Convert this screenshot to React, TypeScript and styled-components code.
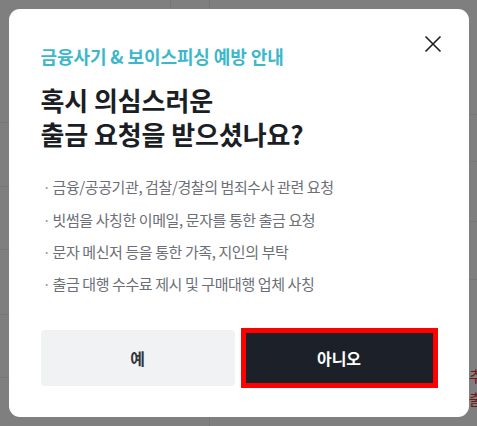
import React from 'react';
import styled, { createGlobalStyle } from 'styled-components';

const font = `'Noto Sans CJK KR', 'Noto Sans', sans-serif`;

const GlobalStyle = createGlobalStyle`
  html, body {
    margin: 0;
    padding: 0;
    background: #ffffff;
    font-family: ${font};
  }
`;

const Page = styled.div`
  display: flex;
  height: 100vh;
  overflow: hidden;
`;

const LeftCol = styled.div`
  width: 209px;
  flex-shrink: 0;
  border-right: 1px solid #ececec;
  display: flex;
  flex-direction: column;
`;

const RightCol = styled.div`
  flex: 1;
  min-width: 0;
  display: flex;
  flex-direction: column;
`;

const Row = styled.div<{ $h: number }>`
  height: ${p => p.$h}px;
  flex-shrink: 0;
  border-bottom: 1px solid #ececec;
  box-sizing: border-box;
`;

const HeadRow = styled.div`
  height: 123px;
  flex-shrink: 0;
  display: flex;
  border-bottom: 1px solid #ececec;
  box-sizing: border-box;
`;

const HeadCell = styled.div`
  width: 170px;
  border-right: 1px solid #ececec;
`;

const Amount = styled.div`
  padding: 6px 0 0 85px;
  font-size: 15px;
  font-weight: 700;
  color: #111;
`;

const Note = styled.div`
  padding: 84px 0 0 259px;
  font-size: 15px;
  line-height: 23px;
  color: #e03030;
  width: 8px;
  overflow: hidden;
  word-break: keep-all;
`;

const Overlay = styled.div`
  position: fixed;
  inset: 0;
  background: rgba(0, 0, 0, 0.5);
  display: flex;
  align-items: center;
  justify-content: center;
`;

const Modal = styled.div`
  position: relative;
  width: 460px;
  box-sizing: border-box;
  background: #ffffff;
  border-radius: 11px;
  padding: 35px 31px 29px 32px;
`;

const CloseButton = styled.button`
  position: absolute;
  top: 23px;
  right: 24px;
  width: 24px;
  height: 24px;
  padding: 0;
  border: 0;
  background: none;
  display: flex;
  align-items: center;
  justify-content: center;
  cursor: pointer;
`;

const Eyebrow = styled.div`
  font-size: 18px;
  line-height: 24px;
  font-weight: 700;
  color: #3db7cb;
  letter-spacing: -0.1px;
`;

const Heading = styled.h2`
  margin: 15px 0 0;
  font-size: 26px;
  line-height: 34px;
  font-weight: 700;
  color: #1b1e25;
  letter-spacing: -0.1px;
`;

const List = styled.ul`
  list-style: none;
  margin: 20px 0 0;
  padding: 0;
`;

const Item = styled.li`
  display: flex;
  font-size: 15px;
  line-height: 32.3px;
  color: #6c6f76;
  letter-spacing: -0.4px;
`;

const Dot = styled.span`
  width: 10px;
  padding-left: 2px;
  flex-shrink: 0;
  color: #9a9ca2;
`;

const Actions = styled.div`
  display: grid;
  grid-template-columns: 194px 197px;
  gap: 6px;
  align-items: center;
  margin-top: 27px;
`;

const ActionButton = styled.button<{ $primary?: boolean }>`
  box-sizing: border-box;
  height: ${p => (p.$primary ? 60 : 56)}px;
  font-family: ${font};
  font-size: 16px;
  font-weight: 700;
  cursor: pointer;
  border: ${p => (p.$primary ? '5px solid #ff0000' : '0')};
  border-radius: ${p => (p.$primary ? '0' : '4px')};
  background: ${p => (p.$primary ? '#1c2029' : '#f1f2f4')};
  color: ${p => (p.$primary ? '#ffffff' : '#33363d')};
`;

const items = [
  '금융/공공기관, 검찰/경찰의 범죄수사 관련 요청',
  '빗썸을 사칭한 이메일, 문자를 통한 출금 요청',
  '문자 메신저 등을 통한 가족, 지인의 부탁',
  '출금 대행 수수료 제시 및 구매대행 업체 사칭',
];

const App = () => (
  <>
    <GlobalStyle />
    <Page>
      <LeftCol>
        <HeadRow>
          <HeadCell />
        </HeadRow>
        <Row $h={64} />
        <Row $h={63} />
        <Row $h={65} />
        <Row $h={63} />
        <Amount>0,000,000 원</Amount>
      </LeftCol>
      <RightCol>
        <Row $h={115} />
        <Row $h={47} />
        <Row $h={60} />
        <Row $h={58} />
        <Note>추 출</Note>
      </RightCol>
    </Page>
    <Overlay>
      <Modal role="dialog">
        <CloseButton aria-label="닫기">
          <svg width="18" height="18" viewBox="0 0 18 18" fill="none">
            <path d="M1.5 1.5L16.5 16.5M16.5 1.5L1.5 16.5" stroke="#1b1e25" strokeWidth="1.6" />
          </svg>
        </CloseButton>
        <Eyebrow>금융사기 &amp; 보이스피싱 예방 안내</Eyebrow>
        <Heading>
          혹시 의심스러운
          <br />
          출금 요청을 받으셨나요?
        </Heading>
        <List>
          {items.map(t => (
            <Item key={t}>
              <Dot>·</Dot>
              {t}
            </Item>
          ))}
        </List>
        <Actions>
          <ActionButton>예</ActionButton>
          <ActionButton $primary>아니오</ActionButton>
        </Actions>
      </Modal>
    </Overlay>
  </>
);

export default App;
